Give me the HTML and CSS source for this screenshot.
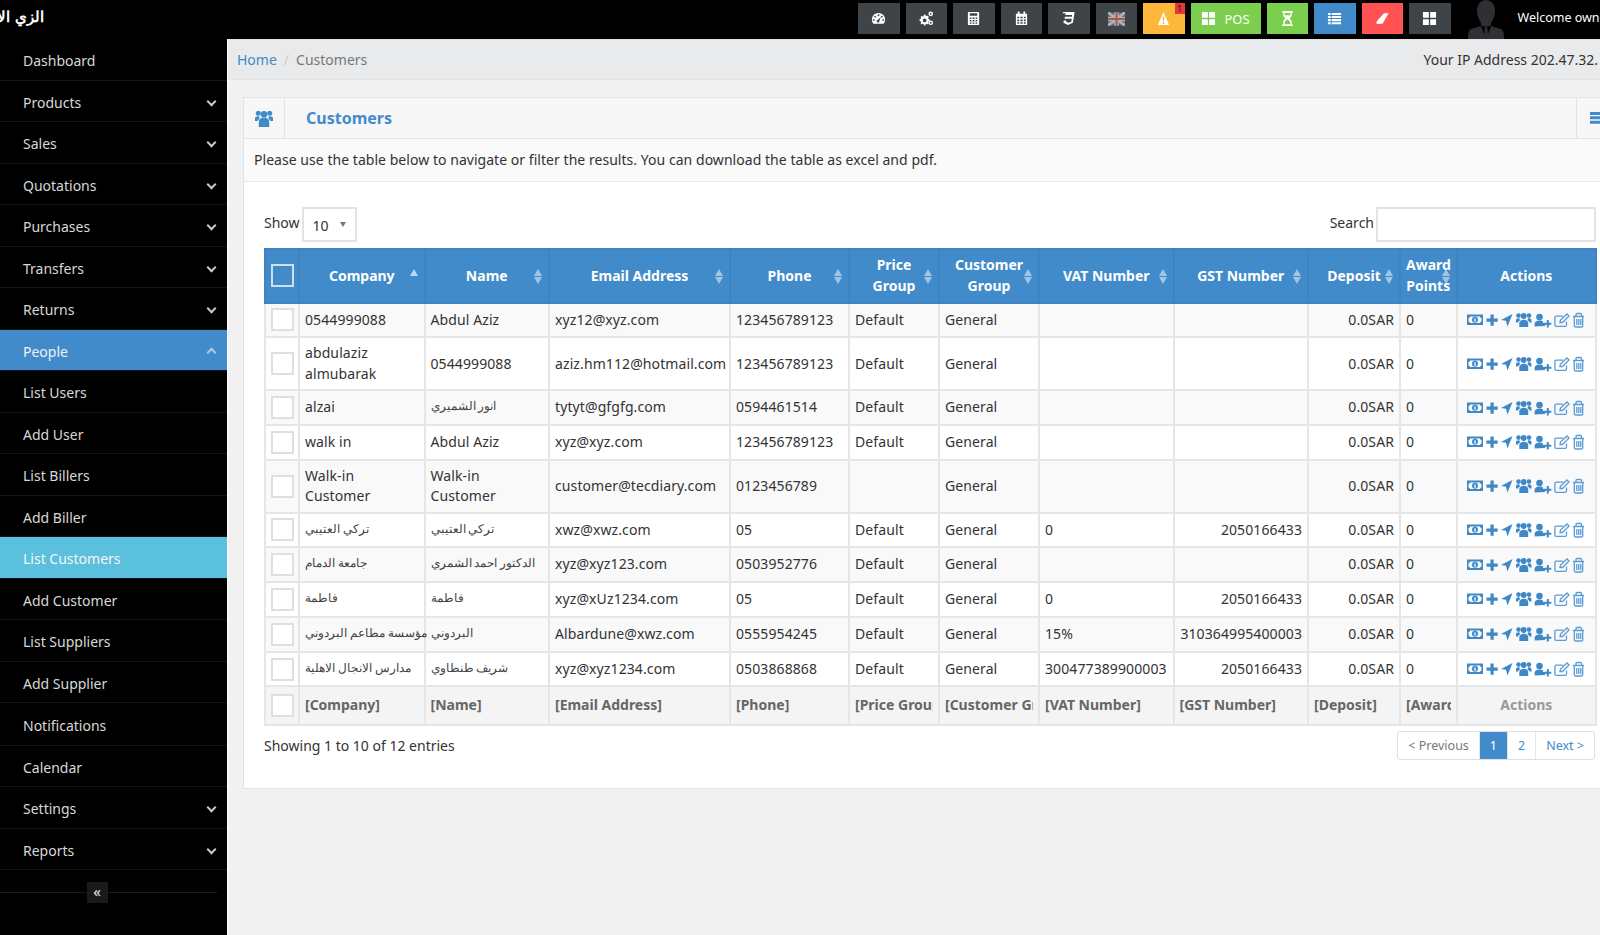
FILE: index.html
```html
<!DOCTYPE html>
<html lang="en">
<head>
    <meta charset="UTF-8">
    <meta name="viewport" content="width=device-width, initial-scale=1.0">
    <title>Customers</title>
    <link rel="stylesheet" href="styles.css">
</head>
<body>
    <svg class="sprites" xmlns="http://www.w3.org/2000/svg">
        <symbol id="i-gauge" viewBox="0 0 16 16"><path fill-rule="evenodd" d="M8 2a7 7 0 0 1 7 7c0 2-.7 3.500-1.700 4.500H2.700C1.700 12.500 1 11 1 9a7 7 0 0 1 7-7zM8 3.500a1 1 0 1 0 0 2 1 1 0 0 0 0-2zM4.500 5a1 1 0 1 0 0 2 1 1 0 0 0 0-2zM11.500 5a1 1 0 1 0 0 2 1 1 0 0 0 0-2zM3 8.500a1 1 0 1 0 0 2 1 1 0 0 0 0-2zM13 8.500a1 1 0 1 0 0 2 1 1 0 0 0 0-2zM10.500 6.500L7.500 9.300a1.500 1.500 0 1 0 1.500 1.200z"/></symbol>
        <symbol id="i-cogs" viewBox="0 0 16 16"><path fill-rule="evenodd" d="M5 4l1.500-.4.500 1.200 1.300.6L9.500 5l1 1.200-.7 1 .3 1.300 1.200.4v1.600l-1.200.4-.4 1.200.7 1.100-1.100 1.100-1.100-.7-1.300.5L7 15.500H5.400l-.4-1.300-1.200-.5-1.100.7L1.600 13.300l.7-1.100-.5-1.200L.5 10.500V9l1.300-.4.500-1.200-.7-1.100 1.100-1.100 1.100.7 1.200-.4zM6 8a2 2 0 1 0 0 4 2 2 0 0 0 0-4z"/><path fill-rule="evenodd" d="M12.500.5a2.500 2.500 0 1 1 0 5 2.500 2.500 0 0 1 0-5zm0 1.500a1 1 0 1 0 0 2 1 1 0 0 0 0-2zM12.500 10a2.500 2.500 0 1 1 0 5 2.500 2.500 0 0 1 0-5zm0 1.500a1 1 0 1 0 0 2 1 1 0 0 0 0-2z"/></symbol>
        <symbol id="i-calc" viewBox="0 0 16 16"><path fill-rule="evenodd" d="M3 1h10a1 1 0 0 1 1 1v12a1 1 0 0 1-1 1H3a1 1 0 0 1-1-1V2a1 1 0 0 1 1-1zm1 1.500V5h8V2.500zM4 7v1.500h1.800V7zm3 0v1.500h2V7zm3.200 0v1.500H12V7zM4 9.700v1.500h1.800V9.700zm3 0v1.500h2V9.700zm3.200 0v1.500H12V9.700zM4 12.300v1.300h1.800v-1.300zm3 0v1.300h2v-1.300zm3.200 0v1.300H12v-1.300z"/></symbol>
        <symbol id="i-cal" viewBox="0 0 16 16"><path fill-rule="evenodd" d="M4 .5h2V3h4V.5h2V3h2v12H2V3h2zM3.500 6v1.800h2V6zm3.300 0v1.800h2.400V6zm3.700 0v1.800h2V6zM3.500 9v1.800h2V9zm3.300 0v1.800h2.400V9zm3.700 0v1.800h2V9zM3.500 12v1.700h2V12zm3.300 0v1.700h2.400V12zm3.700 0v1.700h2V12z"/></symbol>
        <symbol id="i-css" viewBox="0 0 16 16"><path d="M2 1h12.500l-1.800 11.500L7.500 15l-5-2.500.5-2.500h2.500l-.3 1.300 2.800 1.300 3-1.300.5-3H3.700l.5-2.300h7.300l.3-1.700H4.500L5 2.500H2z"/></symbol>
        <symbol id="i-warn" viewBox="0 0 16 16"><path fill-rule="evenodd" d="M8 1l6 14H2zM7.100 6l.3 5h1.200l.3-5zm0 6v1.800h1.800V12z"/></symbol>
        <symbol id="i-grid" viewBox="0 0 16 16"><path d="M1 1h6.300v6.300H1zM8.700 1H15v6.300H8.700zM1 8.700h6.300V15H1zM8.700 8.700H15V15H8.700z"/></symbol>
        <symbol id="i-glass" viewBox="0 0 16 16"><path fill-rule="evenodd" d="M2.500 0h11v2h-1v2.500c0 1.800-1.500 2.700-2.700 3.500 1.200.8 2.700 1.700 2.700 3.500V14h1v2h-11v-2h1v-2.500c0-1.800 1.500-2.700 2.700-3.500C5 7.200 3.500 6.300 3.500 4.500V2h-1zM5 2v2.500h6V2zm3 7c-1.200.8-3 1.500-3 3v2h6v-2c0-1.500-1.800-2.200-3-3z"/></symbol>
        <symbol id="i-list" viewBox="0 0 16 16"><path d="M1 2h3v2.200H1zM5 2h10v2.200H5zM1 5.300h3v2.200H1zM5 5.300h10v2.200H5zM1 8.600h3v2.200H1zM5 8.600h10v2.200H5zM1 11.900h3v2.200H1zM5 11.900h10v2.200H5z"/></symbol>
        <symbol id="i-bars" viewBox="0 0 16 16"><path d="M0 1h16v3.500H0zM0 6h16v3.500H0zM0 11h16v3.500H0z"/></symbol>
        <symbol id="i-eraser" viewBox="0 0 16 16"><path d="M9.500 2.500h5L8 13.500H2L1.500 12z"/><path d="M1.500 12l3.500-5 4 .5-3 6H2.300z" opacity=".75"/></symbol>
        <symbol id="i-users" viewBox="0 0 18 17"><circle cx="9" cy="4.200" r="3.300"/><circle cx="3.300" cy="3.300" r="2.500"/><circle cx="14.700" cy="3.300" r="2.500"/><path d="M3.800 17v-5c0-2.800 2.200-4.500 5.200-4.500s5.200 1.700 5.200 4.500v5z"/><path d="M0 11V8.300C0 7 1.300 6.200 3 6.200c.6 0 1.100.1 1.500.3-.4.900-.2 1.500.3 2.200C3.500 9.300 2.800 10.400 2.800 11zM18 11V8.300c0-1.300-1.300-2.100-3-2.100-.6 0-1.100.1-1.500.3.400.9.200 1.500-.3 2.200 1.300.6 2 1.700 2 2.300z"/></symbol>
        <symbol id="i-actions" viewBox="0 0 118 16">
            <path fill-rule="evenodd" d="M0 2.500h16V13H0zM3 4.500a1.500 1.500 0 0 1-1.500 1.500v3.500A1.500 1.500 0 0 1 3 11h10a1.500 1.500 0 0 1 1.500-1.500V6A1.500 1.500 0 0 1 13 4.500zM8 4.800a3 3 0 1 1 0 6 3 3 0 0 1 0-6zM7 6.500v.8h.5v1.500H7v.8h2.200v-.8h-.6V6.500z"/>
            <path d="M23.500 2.500h3.200v4h4v3.200h-4v4h-3.200v-4h-4V6.500h4z"/>
            <path d="M45.500 2L40.500 14.500 39 8.800 34 8z"/>
            <circle cx="56.700" cy="4" r="2.900"/><circle cx="51.500" cy="3.600" r="2.300"/><circle cx="62" cy="3.600" r="2.300"/>
            <path d="M52.300 15v-4c0-2 2-3.300 4.400-3.300s4.500 1.300 4.500 3.300v4z"/>
            <path d="M49 10.500V8c0-1 1-1.800 2.500-1.800.4 0 .7 0 1 .2-.1 1 .2 1.400.8 1.800-1.200.5-2.100 1.300-2.100 2.300zM64.500 10.500V8c0-1-1-1.800-2.500-1.800-.4 0-.7 0-1 .2.100 1-.2 1.400-.8 1.800 1.200.5 2.100 1.300 2.100 2.300z"/>
            <circle cx="72.500" cy="5" r="3.300"/>
            <path d="M67.600 14.500V12c0-2 2-3.500 4.900-3.500 1.500 0 2.800.4 3.600 1.100v1.500h2v3z"/>
            <path d="M79.800 8h2v2.700h2.500v2h-2.500v2.800h-2v-2.800h-2.600v-2h2.600z"/>
            <g fill="none" stroke="#5b9cd6" stroke-width="1.300">
                <path d="M99.500 9.500v3.500a1.300 1.300 0 0 1-1.300 1.300h-9a1.300 1.300 0 0 1-1.300-1.300V5.500a1.300 1.300 0 0 1 1.300-1.300h7"/>
                <path d="M93 10.500l.5-2.500 6.500-6 2 2-6.500 6.500z"/>
                <path d="M106 4.500h11M107.300 4.500v9.300a1.200 1.200 0 0 0 1.200 1.200h6a1.200 1.200 0 0 0 1.200-1.200V4.500M109 4.500V2.500a1 1 0 0 1 1-1h3.500a1 1 0 0 1 1 1v2M109.800 7v6M111.800 7v6M113.800 7v6"/>
            </g>
        </symbol>
    </svg>

    <header class="topbar">
        <div class="logo"><span>الزي الأول</span></div>
        <div class="tools">
            <a class="tool"><svg class="ico"><use href="#i-gauge"/></svg></a>
            <a class="tool"><svg class="ico"><use href="#i-cogs"/></svg></a>
            <a class="tool"><svg class="ico"><use href="#i-calc"/></svg></a>
            <a class="tool"><svg class="ico"><use href="#i-cal"/></svg></a>
            <a class="tool"><svg class="ico"><use href="#i-css"/></svg></a>
            <a class="tool">
                <svg class="flag" viewBox="0 0 18 14"><rect width="18" height="14" fill="#5d6f8e"/><path d="M0 0l18 14M18 0L0 14" stroke="#c9ccd2" stroke-width="3"/><path d="M9 0v14M0 7h18" stroke="#c9ccd2" stroke-width="5"/><path d="M9 0v14M0 7h18" stroke="#c4603f" stroke-width="2"/></svg>
            </a>
            <a class="tool tool-warn"><svg class="ico"><use href="#i-warn"/></svg><span class="badge">1</span></a>
            <a class="tool tool-green tool-pos"><svg class="ico"><use href="#i-grid"/></svg>POS</a>
            <a class="tool tool-green"><svg class="ico"><use href="#i-glass"/></svg></a>
            <a class="tool tool-blue"><svg class="ico"><use href="#i-list"/></svg></a>
            <a class="tool tool-red"><svg class="ico"><use href="#i-eraser"/></svg></a>
            <a class="tool"><svg class="ico"><use href="#i-grid"/></svg></a>
        </div>
        <svg class="avatar" viewBox="0 0 36 39"><path fill="#2e3033" d="M18 0c6 0 9 5 9 11 0 5-2 9-4 12v3l10 3c2 1 3 4 3 10H0c0-6 1-9 3-10l10-3v-3c-2-3-4-7-4-12C9 5 12 0 18 0z"/><path fill="#000" d="M12.500 25l5.500 14 5.500-14-3 1.500h-5z"/><path fill="#2e3033" d="M16.800 27h2.400l.8 9-2 3-2-3z"/></svg>
        <div class="welcome">Welcome owner</div>
    </header>

    <div class="layout">
        <nav class="sidebar">
            <a class="nav-item">Dashboard</a>
            <a class="nav-item has-sub">Products</a>
            <a class="nav-item has-sub">Sales</a>
            <a class="nav-item has-sub">Quotations</a>
            <a class="nav-item has-sub">Purchases</a>
            <a class="nav-item has-sub">Transfers</a>
            <a class="nav-item has-sub">Returns</a>
            <a class="nav-item has-sub open">People</a>
            <a class="nav-item">List Users</a>
            <a class="nav-item">Add User</a>
            <a class="nav-item">List Billers</a>
            <a class="nav-item">Add Biller</a>
            <a class="nav-item current">List Customers</a>
            <a class="nav-item">Add Customer</a>
            <a class="nav-item">List Suppliers</a>
            <a class="nav-item">Add Supplier</a>
            <a class="nav-item nav-gap">Notifications</a>
            <a class="nav-item">Calendar</a>
            <a class="nav-item has-sub">Settings</a>
            <a class="nav-item has-sub">Reports</a>
            <div class="collapse-row"><span class="collapse-btn">«</span></div>
        </nav>

        <main class="page">
            <div class="breadcrumb">
                <a class="link">Home</a>
                <span class="crumb-sep">/</span>
                <span class="crumb-now">Customers</span>
                <span class="ip">Your IP Address 202.47.32.</span>
            </div>

            <section class="box">
                <div class="box-head">
                    <div class="box-icon"><svg class="ico-users"><use href="#i-users"/></svg></div>
                    <h2>Customers</h2>
                    <div class="box-menu"><svg class="ico"><use href="#i-bars"/></svg></div>
                </div>
                <p class="box-intro">Please use the table below to navigate or filter the results. You can download the table as excel and pdf.</p>
                <div class="box-content">
                    <div class="table-top">
                        <label class="show">Show <span class="select">10</span></label>
                        <label class="search">Search <span class="search-input"></span></label>
                    </div>

                    <table class="data">
                        <colgroup>
                            <col class="c-check"><col class="c-company"><col class="c-name"><col class="c-email"><col class="c-phone"><col class="c-price"><col class="c-group"><col class="c-vat"><col class="c-gst"><col class="c-deposit"><col class="c-award"><col class="c-actions">
                        </colgroup>
                        <thead>
                            <tr>
                                <th class="cell-check"><span class="check"></span></th>
                                <th class="sort-up">Company</th>
                                <th class="sort">Name</th>
                                <th class="sort">Email Address</th>
                                <th class="sort">Phone</th>
                                <th class="sort">Price Group</th>
                                <th class="sort">Customer Group</th>
                                <th class="sort">VAT Number</th>
                                <th class="sort">GST Number</th>
                                <th class="sort">Deposit</th>
                                <th class="sort">Award Points</th>
                                <th>Actions</th>
                            </tr>
                        </thead>
                        <tbody>
                            <tr>
                                <td class="cell-check"><span class="check"></span></td><td>0544999088</td><td>Abdul Aziz</td><td>xyz12@xyz.com</td><td>123456789123</td><td>Default</td><td>General</td><td></td><td></td><td class="num">0.0SAR</td><td>0</td>
                                <td class="acts"><svg class="row-acts"><use href="#i-actions"/></svg></td>
                            </tr>
                            <tr>
                                <td class="cell-check"><span class="check"></span></td><td>abdulaziz almubarak</td><td>0544999088</td><td>aziz.hm112@hotmail.com</td><td>123456789123</td><td>Default</td><td>General</td><td></td><td></td><td class="num">0.0SAR</td><td>0</td>
                                <td class="acts"><svg class="row-acts"><use href="#i-actions"/></svg></td>
                            </tr>
                            <tr>
                                <td class="cell-check"><span class="check"></span></td><td>alzai</td><td><span class="ar">انور الشميري</span></td><td>tytyt@gfgfg.com</td><td>0594461514</td><td>Default</td><td>General</td><td></td><td></td><td class="num">0.0SAR</td><td>0</td>
                                <td class="acts"><svg class="row-acts"><use href="#i-actions"/></svg></td>
                            </tr>
                            <tr>
                                <td class="cell-check"><span class="check"></span></td><td>walk in</td><td>Abdul Aziz</td><td>xyz@xyz.com</td><td>123456789123</td><td>Default</td><td>General</td><td></td><td></td><td class="num">0.0SAR</td><td>0</td>
                                <td class="acts"><svg class="row-acts"><use href="#i-actions"/></svg></td>
                            </tr>
                            <tr>
                                <td class="cell-check"><span class="check"></span></td><td>Walk-in Customer</td><td>Walk-in Customer</td><td>customer@tecdiary.com</td><td>0123456789</td><td></td><td>General</td><td></td><td></td><td class="num">0.0SAR</td><td>0</td>
                                <td class="acts"><svg class="row-acts"><use href="#i-actions"/></svg></td>
                            </tr>
                            <tr>
                                <td class="cell-check"><span class="check"></span></td><td><span class="ar">تركي العتيبي</span></td><td><span class="ar">تركي العتيبي</span></td><td>xwz@xwz.com</td><td>05</td><td>Default</td><td>General</td><td>0</td><td class="num">2050166433</td><td class="num">0.0SAR</td><td>0</td>
                                <td class="acts"><svg class="row-acts"><use href="#i-actions"/></svg></td>
                            </tr>
                            <tr>
                                <td class="cell-check"><span class="check"></span></td><td><span class="ar">جامعة الدمام</span></td><td><span class="ar">الدكتور احمد الشمري</span></td><td>xyz@xyz123.com</td><td>0503952776</td><td>Default</td><td>General</td><td></td><td></td><td class="num">0.0SAR</td><td>0</td>
                                <td class="acts"><svg class="row-acts"><use href="#i-actions"/></svg></td>
                            </tr>
                            <tr>
                                <td class="cell-check"><span class="check"></span></td><td><span class="ar">فاطمة</span></td><td><span class="ar">فاطمة</span></td><td>xyz@xUz1234.com</td><td>05</td><td>Default</td><td>General</td><td>0</td><td class="num">2050166433</td><td class="num">0.0SAR</td><td>0</td>
                                <td class="acts"><svg class="row-acts"><use href="#i-actions"/></svg></td>
                            </tr>
                            <tr>
                                <td class="cell-check"><span class="check"></span></td><td><span class="ar">مؤسسة مطاعم البردوني</span></td><td><span class="ar">البردوني</span></td><td>Albardune@xwz.com</td><td>0555954245</td><td>Default</td><td>General</td><td>15%</td><td class="num">310364995400003</td><td class="num">0.0SAR</td><td>0</td>
                                <td class="acts"><svg class="row-acts"><use href="#i-actions"/></svg></td>
                            </tr>
                            <tr>
                                <td class="cell-check"><span class="check"></span></td><td><span class="ar">مدارس الانجال الاهلية</span></td><td><span class="ar">شريف طنطاوي</span></td><td>xyz@xyz1234.com</td><td>0503868868</td><td>Default</td><td>General</td><td>300477389900003</td><td class="num">2050166433</td><td class="num">0.0SAR</td><td>0</td>
                                <td class="acts"><svg class="row-acts"><use href="#i-actions"/></svg></td>
                            </tr>
                        </tbody>
                        <tfoot>
                            <tr>
                                <td class="cell-check"><span class="check"></span></td>
                                <td><span class="clip">[Company]</span></td>
                                <td><span class="clip">[Name]</span></td>
                                <td><span class="clip">[Email Address]</span></td>
                                <td><span class="clip">[Phone]</span></td>
                                <td><span class="clip">[Price Group]</span></td>
                                <td><span class="clip">[Customer Group]</span></td>
                                <td><span class="clip">[VAT Number]</span></td>
                                <td><span class="clip">[GST Number]</span></td>
                                <td><span class="clip">[Deposit]</span></td>
                                <td><span class="clip">[Award Points]</span></td>
                                <td class="foot-acts">Actions</td>
                            </tr>
                        </tfoot>
                    </table>

                    <div class="table-bottom">
                        <div class="entries">Showing 1 to 10 of 12 entries</div>
                        <div class="pager">
                            <a class="muted">&lt; Previous</a>
                            <a class="active">1</a>
                            <a>2</a>
                            <a>Next &gt;</a>
                        </div>
                    </div>
                </div>
            </section>
        </main>
    </div>
</body>
</html>
```

FILE: styles.css
```css
html, body {
    margin: 0;
    height: 100%;
}

body {
    width: 1600px;
    height: 935px;
    overflow: hidden;
    background: #000;
    color: #333;
    font-family: "Noto Sans", "DejaVu Sans", sans-serif;
    font-size: 14px;
}

.sprites {
    display: none;
}

/* top bar */
.topbar {
    display: flex;
    align-items: flex-start;
    height: 39px;
    background: #000;
}

.topbar > * {
    flex-shrink: 0;
}

.logo {
    width: 44px;
    height: 39px;
    overflow: hidden;
    direction: rtl;
    white-space: nowrap;
    color: #fff;
    font-family: "DejaVu Serif", serif;
    font-size: 15px;
    font-weight: bold;
    line-height: 34px;
}

.tools {
    display: flex;
    gap: 6px;
    margin-left: 814px;
    margin-top: 3px;
}

.tool {
    position: relative;
    display: flex;
    align-items: center;
    justify-content: center;
    flex-shrink: 0;
    gap: 8px;
    width: 41.5px;
    height: 31px;
    background: #3f4448;
    color: #fff;
    font-size: 13px;
}

.tool .ico {
    width: 15px;
    height: 15px;
    fill: #fff;
}

.flag {
    width: 17px;
    height: 14px;
    opacity: 0.8;
}

.tool-warn { background: #fdb73a; }
.tool-green { background: #7cce4e; }
.tool-blue { background: #428bca; }
.tool-red { background: #ff5252; }

.tool-pos {
    width: 70px;
}

.badge {
    position: absolute;
    top: 0;
    right: 0;
    width: 10px;
    height: 11px;
    background: #e8363b;
    color: #222;
    font-size: 9px;
    line-height: 11px;
    text-align: center;
}

.avatar {
    width: 36px;
    height: 39px;
    margin-left: 17px;
}

.welcome {
    margin-left: 14px;
    color: #fff;
    font-size: 12.500px;
    line-height: 36px;
    white-space: nowrap;
}

/* layout */
.layout {
    display: flex;
    height: 896px;
}

.sidebar {
    width: 227px;
    flex-shrink: 0;
    background: #000;
}

.nav-item {
    display: block;
    position: relative;
    box-sizing: border-box;
    height: 41.5px;
    padding-left: 23px;
    border-bottom: 1px solid #141414;
    color: #d8d8d8;
    line-height: 43px;
}

.nav-gap {
    margin-top: 1px;
}

.has-sub::after {
    content: "";
    position: absolute;
    top: 17px;
    right: 12px;
    width: 5px;
    height: 5px;
    border-right: 2px solid #c9c9c9;
    border-bottom: 2px solid #c9c9c9;
    transform: rotate(45deg);
}

.open {
    background: #428bca;
    color: #f2f2f2;
}

.open::after {
    top: 19px;
    border-color: #a9cbe8;
    transform: rotate(-135deg);
}

.current {
    background: #5bc0de;
    color: #f5f5f5;
}

.collapse-row {
    position: relative;
    display: flex;
    justify-content: center;
    margin-top: 12px;
    padding-right: 33px;
}

.collapse-row::before {
    content: "";
    position: absolute;
    top: 10px;
    left: 0;
    right: 10px;
    border-top: 1px solid #1c1c1c;
}

.collapse-btn {
    position: relative;
    width: 21px;
    height: 21px;
    background: #1a1a1a;
    color: #e8e8e8;
    font-size: 15px;
    line-height: 19px;
    text-align: center;
}

/* page */
.page {
    width: 1380px;
    flex-shrink: 0;
    box-sizing: border-box;
    border-left: 1px solid #fff;
    background: #f1f1f1;
}

.breadcrumb {
    display: flex;
    align-items: center;
    height: 41px;
    padding: 0 7px 0 9px;
    border-top: 1px solid #e2e2e2;
    border-bottom: 1px solid #e3e3e3;
    box-sizing: border-box;
    background: #e9eaeb;
}

.link {
    color: #428bca;
}

.crumb-sep {
    margin: 0 7px;
    color: #ccc;
}

.crumb-now {
    color: #777;
}

.ip {
    margin-left: auto;
    margin-right: 2px;
    color: #333;
    white-space: nowrap;
}

.box {
    margin: 17px 0 0 15px;
    border: 1px solid #e3e3e3;
    background: #fff;
}

.box-head {
    display: flex;
    height: 40px;
    background: #f7f7f7;
    border-bottom: 1px solid #e3e3e3;
}

.box-icon {
    display: flex;
    align-items: center;
    justify-content: center;
    width: 40px;
    border-right: 1px solid #e3e3e3;
}

.ico-users {
    width: 18px;
    height: 17px;
    fill: #428bca;
}

.box-head h2 {
    margin: 0 0 0 21px;
    color: #428bca;
    font-size: 16px;
    font-weight: bold;
    line-height: 40px;
}

.box-menu {
    display: flex;
    align-items: center;
    margin-left: auto;
    width: 30px;
    padding-left: 12px;
    box-sizing: border-box;
    border-left: 1px solid #e3e3e3;
}

.box-menu .ico {
    width: 16px;
    height: 14px;
    flex-shrink: 0;
    fill: #428bca;
}

.box-intro {
    margin: 0;
    height: 42px;
    padding-left: 10px;
    background: #fafafa;
    border-bottom: 1px solid #e8e8e8;
    letter-spacing: 0.04px;
    line-height: 41px;
}

.box-content {
    padding: 25px 0 27.5px 20px;
}

.table-top {
    display: flex;
    justify-content: space-between;
    width: 1332px;
    height: 35px;
    margin-bottom: 6px;
}

.show, .search {
    display: flex;
    align-items: flex-start;
    gap: 2px;
    line-height: 31px;
}

.select {
    box-sizing: border-box;
    width: 55px;
    height: 35px;
    padding-left: 9px;
    border: 2px solid #e3e3e3;
    line-height: 33px;
    position: relative;
}

.select::after {
    content: "";
    position: absolute;
    top: 13px;
    right: 9px;
    border-top: 5px solid #777;
    border-left: 3px solid transparent;
    border-right: 3px solid transparent;
}

.search-input {
    box-sizing: border-box;
    width: 220px;
    height: 35px;
    border: 2px solid #e3e3e3;
}

/* table */
.data {
    table-layout: fixed;
    width: 1331px;
    border-collapse: collapse;
    border: 2px solid #e6e6e6;
    border-top: 0;
    letter-spacing: 0.1px;
}

.c-check { width: 34px; }
.c-company { width: 125.500px; }
.c-name { width: 124.500px; }
.c-email { width: 181px; }
.c-phone { width: 119px; }
.c-price { width: 90px; }
.c-group { width: 100px; }
.c-vat { width: 134.500px; }
.c-gst { width: 134.500px; }
.c-deposit { width: 92px; }
.c-award { width: 56.500px; }
.c-actions { width: 139.500px; }

.data th, .data td {
    padding: 4.900px 5px;
    border: 2px solid #e6e6e6;
    line-height: 20.500px;
    vertical-align: middle;
}

.data thead tr {
    height: 53.600px;
}

.data th {
    position: relative;
    border-color: #3d85c2;
    background: #428bca;
    color: #fff;
    font-weight: bold;
    letter-spacing: 0;
    text-align: center;
}

.data .cell-check {
    padding-left: 4.500px;
    padding-right: 4.500px;
}

.sort::before, .sort::after, .sort-up::before {
    content: "";
    position: absolute;
    right: 6px;
    border-left: 4px solid transparent;
    border-right: 4px solid transparent;
}

.sort::before, .sort-up::before {
    top: 19px;
    border-bottom: 7px solid rgba(255, 255, 255, 0.5);
}

.sort::after {
    top: 27px;
    border-top: 7px solid rgba(255, 255, 255, 0.5);
}

.sort-up::before {
    border-bottom-color: rgba(255, 255, 255, 0.65);
}

.check {
    display: block;
    box-sizing: border-box;
    width: 23px;
    height: 23px;
    border: 2px solid #dfdfdf;
    background: #fff;
}

th .check {
    background: #428bca;
    border-color: #cfdfee;
}

.ar {
    display: block;
    color: #444;
    font-family: "Liberation Serif", serif;
    font-size: 11.600px;
    letter-spacing: 0;
    white-space: nowrap;
}

.data tbody tr:nth-child(odd) td {
    background: #f9f9f9;
}

.num {
    text-align: right;
}

.acts {
    text-align: center;
    line-height: 0 !important;
}

.row-acts {
    width: 118px;
    height: 16px;
    fill: #3f88c8;
    vertical-align: middle;
}

.data tfoot td {
    padding-top: 6.700px;
    padding-bottom: 6.700px;
    background: #f4f4f4;
    color: #666;
    font-weight: bold;
    letter-spacing: 0;
}

.clip {
    display: block;
    overflow: hidden;
    white-space: nowrap;
}

.data .foot-acts {
    color: #999;
    text-align: center;
}

.table-bottom {
    display: flex;
    justify-content: space-between;
    align-items: center;
    width: 1331px;
    height: 29px;
    margin-top: 5.500px;
}

.pager {
    display: flex;
    height: 29px;
    box-sizing: border-box;
    border: 1px solid #e0e0e0;
    border-radius: 3px;
    color: #428bca;
    font-size: 12.500px;
    line-height: 27px;
}

.pager a {
    padding: 0 10px;
    border-left: 1px solid #e6e6e6;
}

.pager a:first-child {
    border-left: 0;
}

.pager .muted {
    color: #777;
}

.pager .active {
    background: #428bca;
    color: #fff;
}
```
